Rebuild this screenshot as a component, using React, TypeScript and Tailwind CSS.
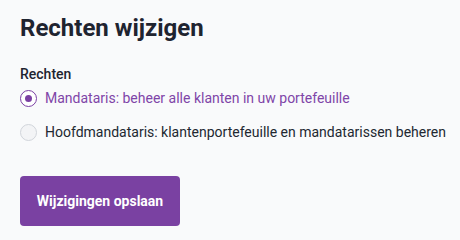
import { useState } from "react";

const options = [
  { id: "mandataris", label: "Mandataris: beheer alle klanten in uw portefeuille" },
  { id: "hoofd", label: "Hoofdmandataris: klantenportefeuille en mandatarissen beheren" },
];

export default function App() {
  const [value, setValue] = useState("mandataris");

  return (
    <div className="min-h-screen bg-[#f9fafb] pl-5 pr-2 pt-[12px] font-['Roboto',sans-serif]">
      <h1 className="text-[24px] font-bold leading-[32px] text-[#1f2430]">Rechten wijzigen</h1>

      <fieldset className="mt-[20px]">
        <legend className="text-[14px] font-medium leading-5 text-[#1f2430]">Rechten</legend>
        <div className="mt-[4px] flex flex-col gap-[14px]">
          {options.map((o) => {
            const checked = value === o.id;
            return (
              <label key={o.id} className="flex cursor-pointer items-center gap-[8px]">
                <span
                  className={`flex h-[17px] w-[17px] shrink-0 items-center justify-center rounded-full border ${
                    checked ? "border-[#7b40a3] bg-white" : "border-[#d1d5db] bg-[#f3f4f6]"
                  }`}
                >
                  {checked && <span className="h-[7px] w-[7px] rounded-full bg-[#7b40a3]" />}
                </span>
                <input
                  type="radio"
                  name="rechten"
                  className="sr-only"
                  checked={checked}
                  onChange={() => setValue(o.id)}
                />
                <span
                  className={`whitespace-nowrap text-[14px] leading-5 ${
                    checked ? "text-[#7f45a8]" : "text-[#222831]"
                  }`}
                >
                  {o.label}
                </span>
              </label>
            );
          })}
        </div>
      </fieldset>

      <button className="mt-[34px] h-[50px] w-[160px] rounded-[4px] bg-[#7a41a2] text-[14px] font-bold text-white">
        Wijzigingen opslaan
      </button>
    </div>
  );
}
